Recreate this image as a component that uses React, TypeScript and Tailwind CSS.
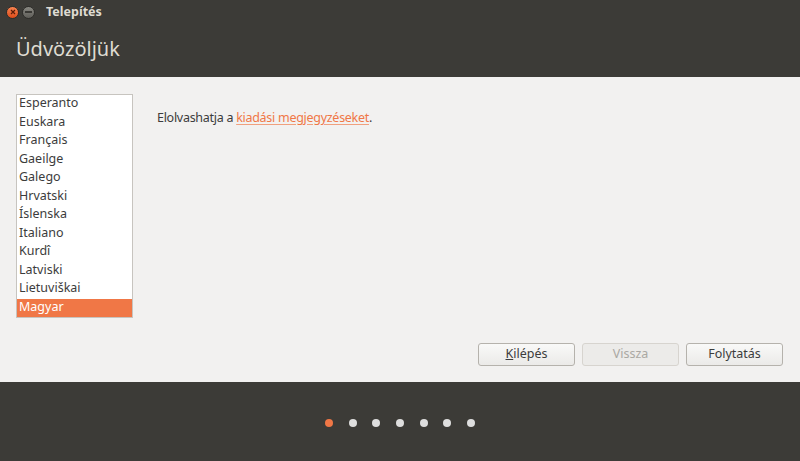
import { useState } from 'react'

const languages = [
  'Esperanto',
  'Euskara',
  'Français',
  'Gaeilge',
  'Galego',
  'Hrvatski',
  'Íslenska',
  'Italiano',
  'Kurdî',
  'Latviski',
  'Lietuviškai',
  'Magyar',
]

export default function App() {
  const [selected, setSelected] = useState('Magyar')

  return (
    <div
      className="flex flex-col w-[800px] h-[461px] overflow-hidden text-[#3c3c3c]"
      style={{ fontFamily: '"Noto Sans", "DejaVu Sans", sans-serif' }}
    >
      {/* title bar + header */}
      <div className="h-[77px] bg-[#3c3b37] flex flex-col">
        <div className="h-[24px] flex items-center pl-[6px]">
          <div className="w-[13px] h-[13px] rounded-full bg-gradient-to-b from-[#f7834f] to-[#dc4a16] flex items-center justify-center border border-[#2e2d2a]">
            <svg width="6" height="6" viewBox="0 0 6 6">
              <path d="M1 1 L5 5 M5 1 L1 5" stroke="#5a1c08" strokeWidth="1.2" />
            </svg>
          </div>
          <div className="ml-[3px] w-[13px] h-[13px] rounded-full bg-gradient-to-b from-[#8a8983] to-[#5e5d58] flex items-center justify-center border border-[#2e2d2a]">
            <div className="w-[7px] h-[1.5px] bg-[#3a3935]" />
          </div>
          <span className="ml-[11px] text-[12.5px] font-bold text-[#dfdbd2] leading-none">
            Telepítés
          </span>
        </div>
        <div className="pl-[16px] pt-[15px] text-[20px] text-[#dfdbd2] leading-none">
          Üdvözöljük
        </div>
      </div>

      {/* main content */}
      <div className="h-[305px] bg-[#f2f1f0] flex flex-col">
        <div className="flex flex-1 pt-[17px] pl-[16px]">
          <div className="w-[117px] h-[224px] bg-white border border-[#c7c4bf] flex flex-col">
            {languages.map((l) => (
              <div
                key={l}
                onClick={() => setSelected(l)}
                className={`h-[18.5px] pl-[2px] text-[12.5px] leading-[16.5px] ${
                  selected === l ? 'bg-[#f07746] text-white' : ''
                }`}
              >
                {l}
              </div>
            ))}
          </div>
          <div className="ml-[24px] pt-[15px] text-[12.5px] tracking-[-0.28px]">
            Elolvashatja a{' '}
            <a className="text-[#f07746] underline underline-offset-2 decoration-[#f0a07e]">
              kiadási megjegyzéseket
            </a>
            .
          </div>
        </div>
        <div className="flex justify-end gap-[7px] pr-[17px] pb-[16px]">
          <button className="w-[97px] h-[23px] rounded-[3px] border border-[#b5b2ac] bg-gradient-to-b from-[#f9f9f8] to-[#ebeae8] text-[12.5px] text-[#3c3c3c]">
            <span className="underline">K</span>ilépés
          </button>
          <button
            disabled
            className="w-[97px] h-[23px] rounded-[3px] border border-[#d7d4cf] bg-[#ecebe9] text-[12.5px] text-[#aaa8a3]"
          >
            Vissza
          </button>
          <button className="w-[97px] h-[23px] rounded-[3px] border border-[#b5b2ac] bg-gradient-to-b from-[#f9f9f8] to-[#ebeae8] text-[12.5px] text-[#3c3c3c]">
            Folytatás
          </button>
        </div>
      </div>

      {/* progress dots */}
      <div className="flex-1 bg-[#3c3b37] flex items-center justify-center gap-[15.6px] pt-[2px]">
        {[0, 1, 2, 3, 4, 5, 6].map((i) => (
          <div
            key={i}
            className={`w-[8px] h-[8px] rounded-full ${
              i === 0 ? 'bg-[#f07746]' : 'bg-[#dedede]'
            }`}
          />
        ))}
      </div>
    </div>
  )
}
